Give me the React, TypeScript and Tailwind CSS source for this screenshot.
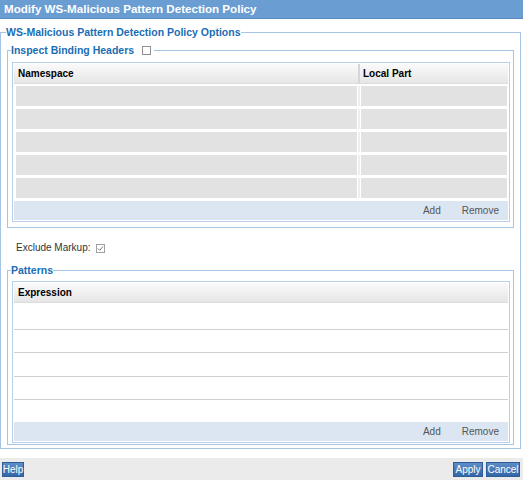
import React from 'react';

const rowsTop = [0, 1, 2, 3, 4];
const patternRows = ['h-[27px]', 'h-[23px]', 'h-[24px]', 'h-[23px]'];

function TableFooter() {
  return (
    <div className="h-[19px] bg-[#dbe6f2] flex items-center justify-end gap-[21px] pr-[9px] text-[10px] text-[#555]">
      <span>Add</span>
      <span>Remove</span>
    </div>
  );
}

function Button({ label, w }: { label: string; w: string }) {
  return (
    <button
      className={`${w} h-[15px] flex items-center justify-center bg-gradient-to-b from-[#5e8ec8] to-[#3366a6] border border-[#2d5d98] text-white text-[10px] leading-none`}
    >
      {label}
    </button>
  );
}

export default function App() {
  return (
    <div className="w-[523px] h-[481px] bg-white flex flex-col overflow-hidden font-['Liberation_Sans',Arial,sans-serif]">
      {/* Title bar */}
      <div className="h-[19px] shrink-0 bg-[#6a9ed3] border-b border-[#5a8cc2] px-[4px] flex items-center text-white text-[11.6px] font-bold">
        Modify WS-Malicious Pattern Detection Policy
      </div>

      <div className="pt-[6px] pr-[2px]">
        <fieldset className="border border-[#a6c5e5] px-[6px] pb-[3px]">
          <legend className="-ml-[1px] text-[10.5px] leading-[14px] font-bold text-[#1a6db5]">
            WS-Malicious Pattern Detection Policy Options
          </legend>

          {/* Inspect Binding Headers */}
          <fieldset className="mt-[4px] border border-[#a6c5e5] pl-[4px] pr-[3px] pt-[5px] pb-[5px]">
            <legend className="-ml-[1px] pr-[3px] text-[10.5px] leading-[14px] font-bold text-[#1a6db5]">
              Inspect Binding Headers
              <span className="inline-block align-[-1px] ml-[8px] w-[9px] h-[9px] border border-[#8f8f8f] bg-white" />
            </legend>

            <div className="border border-[#b8d0ea] p-[1px]">
              <div className="h-[20px] flex bg-gradient-to-b from-[#fafafa] to-[#e6e6e6] border-b border-[#dcdcdc] text-[10px] font-bold text-black">
                <div className="w-[344px] pl-[4px] flex items-center">Namespace</div>
                <div className="w-[2px] bg-[#d6d6d6]" />
                <div className="flex-1 pl-[3px] flex items-center">Local Part</div>
              </div>
              <div className="flex flex-col gap-[3px] pt-[2px] pb-[3px]">
                {rowsTop.map((r) => (
                  <div key={r} className="h-[20px] flex pl-[2px] pr-[1px]">
                    <div className="w-[341px] bg-[#e2e2e2]" />
                    <div className="w-[4px] border-x border-white bg-[#eeeeee]" />
                    <div className="flex-1 bg-[#e2e2e2]" />
                  </div>
                ))}
              </div>
              <TableFooter />
            </div>
          </fieldset>

          {/* Exclude Markup */}
          <div className="mt-[14px] ml-[9px] flex items-center gap-[6px] text-[10px] leading-[12px] text-[#333]">
            <span>Exclude Markup:</span>
            <span className="w-[9px] h-[9px] border border-[#a0a0a0] bg-white flex items-center justify-center">
              <svg width="7" height="7" viewBox="0 0 7 7">
                <path d="M1 3.5 L2.8 5.3 L6 1.5" fill="none" stroke="#777" strokeWidth="1" />
              </svg>
            </span>
          </div>

          {/* Patterns */}
          <fieldset className="mt-[9px] border border-[#a6c5e5] pl-[4px] pr-[3px] pt-[4px] pb-[1px]">
            <legend className="-ml-[1px] text-[10.5px] leading-[14px] font-bold text-[#1a6db5]">Patterns</legend>
            <div className="border border-[#b8d0ea] p-[1px]">
              <div className="h-[20px] flex items-center pl-[4px] bg-gradient-to-b from-[#fafafa] to-[#e6e6e6] border-b border-[#dcdcdc] text-[10px] font-bold text-black">
                Expression
              </div>
              {patternRows.map((h, i) => (
                <div key={i} className={`${h} border-b border-[#d0d0d0] bg-white`} />
              ))}
              <div className="h-[22px] bg-white" />
              <TableFooter />
            </div>
          </fieldset>
        </fieldset>
      </div>

      {/* Bottom bar */}
      <div className="mt-[9px] h-[22px] bg-[#ebebeb] flex items-start pt-[4px] pl-[2px] pr-[3px]">
        <Button label="Help" w="w-[22px]" />
        <div className="flex-1" />
        <div className="flex gap-[3px]">
          <Button label="Apply" w="w-[30px]" />
          <Button label="Cancel" w="w-[34px]" />
        </div>
      </div>
    </div>
  );
}
